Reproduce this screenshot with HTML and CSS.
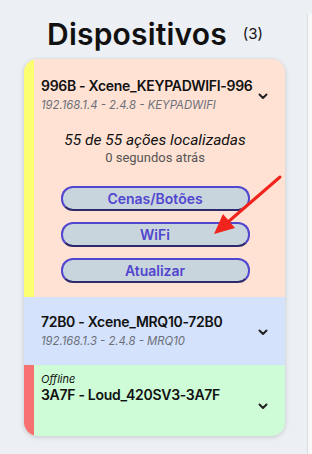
FILE: index.html
```html
<!DOCTYPE html>
<html lang="pt">
<head>
  <meta charset="UTF-8" />
  <meta name="viewport" content="width=device-width, initial-scale=1.0" />
  <title>Dispositivos</title>
  <link rel="stylesheet" href="styles.css">
</head>
<body>
  <div class="page">
    <div class="main">
      <h1 class="title">Dispositivos <span class="count">(3)</span></h1>

      <div class="device-list">
        <!-- device 1 -->
        <div class="device device-online">
          <div class="device-head">
            <div class="device-info">
              <div class="device-name">996B - Xcene_KEYPADWIFI-996B</div>
              <div class="device-meta">192.168.1.4 - 2.4.8 - KEYPADWIFI</div>
            </div>
            <svg class="chevron" width="10" height="7" viewBox="0 0 10 7"><path d="M1.5 1.5 L5 5 L8.5 1.5" fill="none" stroke="#222" stroke-width="2" stroke-linecap="round" stroke-linejoin="round"/></svg>
          </div>
          <div class="device-body">
            <div class="status-main">55 de 55 ações localizadas</div>
            <div class="status-time">0 segundos atrás</div>
            <div class="btn-group">
              <a href="#" class="device-btn">Cenas/Botões</a>
              <a href="#" class="device-btn">WiFi</a>
              <a href="#" class="device-btn">Atualizar</a>
            </div>
          </div>
        </div>

        <!-- device 2 -->
        <div class="device device-blue">
          <div class="device-head">
            <div class="device-info">
              <div class="device-name">72B0 - Xcene_MRQ10-72B0</div>
              <div class="device-meta">192.168.1.3 - 2.4.8 - MRQ10</div>
            </div>
            <svg class="chevron" width="10" height="7" viewBox="0 0 10 7"><path d="M1.5 1.5 L5 5 L8.5 1.5" fill="none" stroke="#222" stroke-width="2" stroke-linecap="round" stroke-linejoin="round"/></svg>
          </div>
        </div>

        <!-- device 3 -->
        <div class="device device-offline">
          <div class="device-head head-offline">
            <div class="device-info">
              <div class="offline-label">Offline</div>
              <div class="device-name">3A7F - Loud_420SV3-3A7F</div>
            </div>
            <svg class="chevron" width="10" height="7" viewBox="0 0 10 7"><path d="M1.5 1.5 L5 5 L8.5 1.5" fill="none" stroke="#222" stroke-width="2" stroke-linecap="round" stroke-linejoin="round"/></svg>
          </div>
        </div>
      </div>
    </div>
    <div class="side"></div>
  </div>

  <!-- annotation arrow -->
  <svg class="arrow" width="312" height="454" viewBox="0 0 312 454">
    <line x1="280" y1="177" x2="228" y2="222" stroke="#f0241c" stroke-width="3" stroke-linecap="round"/>
    <polygon points="214,234 223,214 235,228" fill="#f0241c"/>
  </svg>
</body>
</html>
```

FILE: styles.css
```css
body {
  margin: 0;
  background: #eceff4;
  font-family: Inter, "Open Sans", sans-serif;
  color: #111;
}
.page {
  display: flex;
  min-height: 454px;
}
.main {
  width: 307px;
}
.side {
  flex: 1;
  margin-top: 14px;
  background: #f8f8f8;
  border-left: 1px solid #dcdcdc;
}
.title {
  margin: 0;
  padding-top: 16px;
  padding-left: 3px;
  height: 43px;
  box-sizing: border-box;
  text-align: center;
  font-size: 30px;
  font-weight: 600;
  line-height: 35px;
  letter-spacing: 0.2px;
}
.count {
  font-size: 15px;
  font-weight: 400;
  margin-left: 8px;
  vertical-align: 6px;
  letter-spacing: 0;
}
.device-list {
  margin: 16px 22px 0 24px;
  border-radius: 14px;
  overflow: hidden;
  box-shadow: 0 1px 5px rgba(0, 0, 0, 0.18);
}
.device {
  border-left: 10px solid transparent;
  box-shadow: 0 1px 2px rgba(0, 0, 0, 0.12);
  position: relative;
}
.device-online {
  background: #ffe2d4;
  border-left-color: #fbff70;
}
.device-blue {
  background: #d4e2fc;
  border-left-color: #d4e2fc;
}
.device-offline {
  background: #cdfcd6;
  border-left-color: #f87171;
}
.device-head {
  display: flex;
  align-items: center;
  padding: 18px 17px 0 7px;
}
.device-blue .device-head {
  padding-top: 16px;
  padding-bottom: 17px;
}
.head-offline {
  align-items: stretch;
  padding-top: 8px;
  min-height: 63px;
}
.head-offline .chevron {
  align-self: center;
}
.device-info {
  flex: 1;
  min-width: 0;
}
.device-name {
  font-size: 14px;
  font-weight: 600;
  line-height: 17px;
  letter-spacing: -0.3px;
  white-space: nowrap;
  overflow: hidden;
}
.device-meta {
  margin-top: 4px;
  font-size: 11.3px;
  font-style: italic;
  color: #6b6f7a;
  line-height: 14px;
}
.offline-label {
  font-size: 11px;
  font-style: italic;
  line-height: 13px;
}
.chevron {
  flex: none;
  margin-left: 5px;
  margin-top: 4px;
}
.device-body {
  padding: 19px 9px 14px 0;
  text-align: center;
}
.status-main {
  font-size: 15.5px;
  font-style: italic;
  line-height: 19px;
  font-family: Roboto, sans-serif;
}
.status-time {
  font-size: 13px;
  color: #555;
  line-height: 16px;
  font-family: Roboto, sans-serif;
}
.btn-group {
  display: flex;
  flex-direction: column;
  align-items: center;
  gap: 11px;
  margin-top: 20px;
}
.device-btn {
  display: block;
  box-sizing: border-box;
  width: 189px;
  height: 25px;
  line-height: 21px;
  background: #c9d5dc;
  border: 2px solid #5146cf;
  border-bottom-color: #2e2a6e;
  border-radius: 12px;
  color: #5146cf;
  font-size: 14px;
  font-weight: 600;
  text-decoration: none;
}
.arrow {
  position: absolute;
  top: 0;
  left: 0;
  pointer-events: none;
}
```
